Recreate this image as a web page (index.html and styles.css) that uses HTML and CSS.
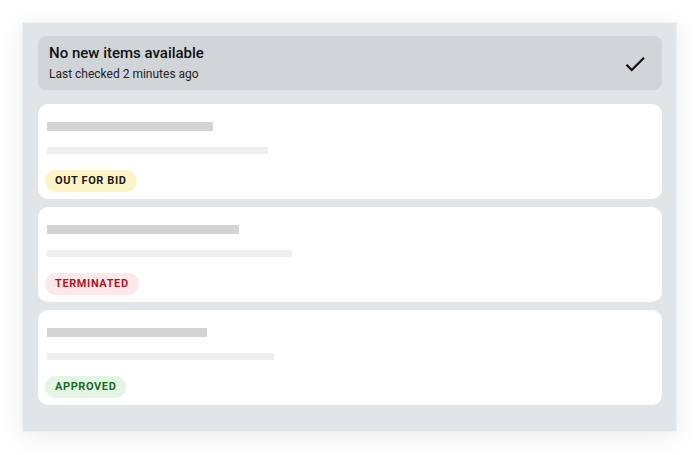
FILE: index.html
```html
<!DOCTYPE html>
<html lang="en">
<head>
  <meta charset="UTF-8" />
  <title>Items</title>
  <link rel="stylesheet" href="styles.css">
</head>
<body>
  <div class="panel">
    <div class="status">
      <div class="status-text">
        <div class="status-title">No new items available</div>
        <div class="status-sub">Last checked 2 minutes ago</div>
      </div>
      <svg class="check" viewBox="0 0 24 24" width="26" height="26">
        <path d="M9 16.17L4.83 12l-1.42 1.41L9 19 21 7l-1.41-1.41z" fill="#111" />
      </svg>
    </div>

    <div class="card">
      <div class="bar bar-dark" style="width: 166px"></div>
      <div class="bar bar-light" style="width: 221px"></div>
      <span class="badge badge-bid">OUT FOR BID</span>
    </div>
    <div class="card">
      <div class="bar bar-dark" style="width: 192px"></div>
      <div class="bar bar-light" style="width: 245px"></div>
      <span class="badge badge-term">TERMINATED</span>
    </div>
    <div class="card">
      <div class="bar bar-dark" style="width: 160px"></div>
      <div class="bar bar-light" style="width: 227px"></div>
      <span class="badge badge-ok">APPROVED</span>
    </div>
  </div>
</body>
</html>
```

FILE: styles.css
```css
* {
  box-sizing: border-box;
}

body {
  margin: 0;
  padding: 22px;
  background: #ffffff;
  font-family: Roboto, "Liberation Sans", sans-serif;
  color: #111;
}

.panel {
  width: 655px;
  height: 410px;
  background: #e1e5e8;
  border: 1px solid #eef0f2;
  padding: 13px 14px 0 15px;
  box-shadow: 0 4px 24px rgba(0, 0, 0, 0.08);
  display: flex;
  flex-direction: column;
  gap: 8px;
}

.status {
  height: 54px;
  background: #d1d5d8;
  border-radius: 8px;
  padding: 0 14px 0 11px;
  display: flex;
  align-items: center;
  justify-content: space-between;
  margin-bottom: 6px;
}

.status-title {
  font-size: 15px;
  font-weight: 500;
  line-height: 18px;
  margin-top: -1px;
}

.status-sub {
  font-size: 12px;
  line-height: 14px;
  margin-top: 5px;
  color: #222;
}

.check {
  display: block;
  margin-top: 1px;
}

.card {
  height: 95px;
  background: #ffffff;
  border-radius: 10px;
  padding: 18px 7px 0 9px;
}

.bar {
  height: 9px;
}

.bar-dark {
  background: #d4d4d4;
}

.bar-light {
  height: 7px;
  margin-top: 16px;
  background: #efefef;
}

.badge {
  display: inline-block;
  margin: 16px 0 0 -2px;
  padding: 0 10px;
  height: 22px;
  line-height: 22px;
  border-radius: 11px;
  font-size: 11px;
  font-weight: 700;
  letter-spacing: 0.6px;
}

.badge-bid {
  background: #fdf4c6;
  color: #1a1a1a;
}

.badge-term {
  background: #fde8ea;
  color: #b3141d;
}

.badge-ok {
  background: #e3f6e4;
  color: #1c6b1f;
}
```
